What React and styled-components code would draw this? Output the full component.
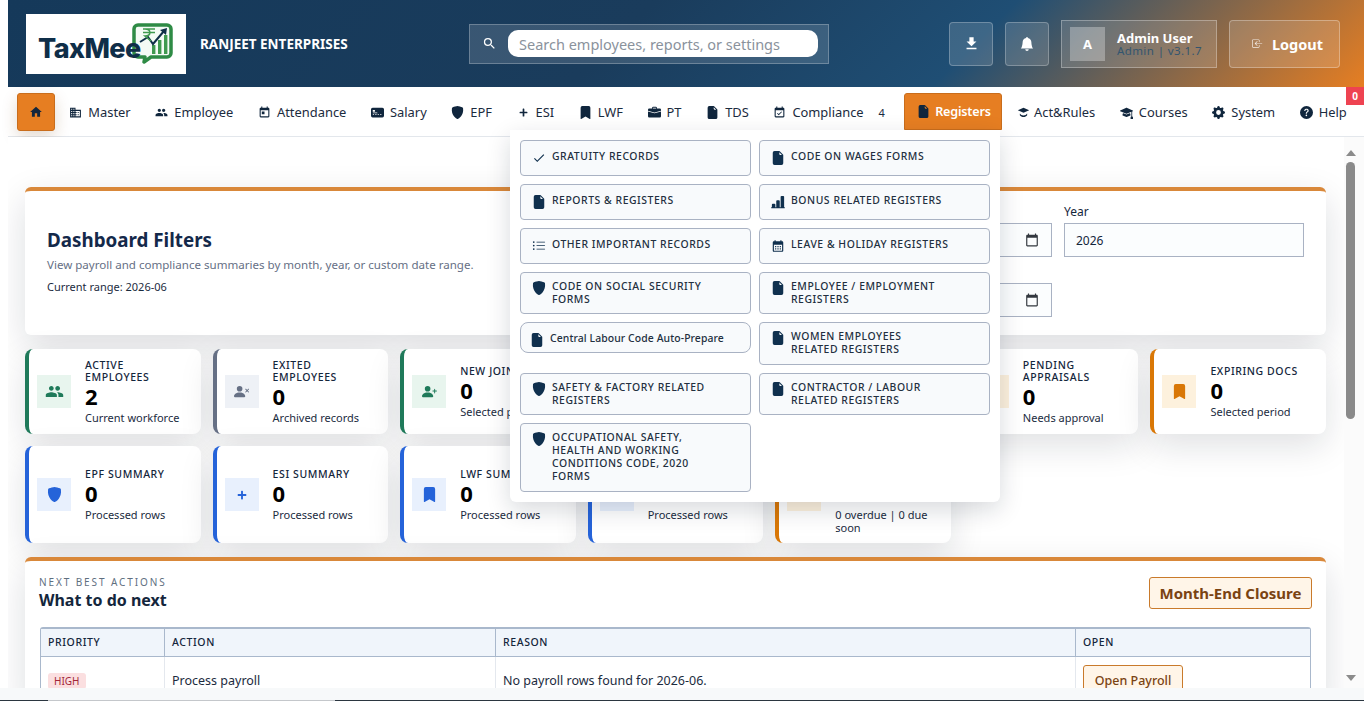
import React from 'react';
import styled, { createGlobalStyle } from 'styled-components';
import { MdHome, MdBusiness, MdPeople, MdToday, MdEventAvailable, MdCheck, MdFileDownload, MdSearch, MdCalendarToday, MdCalendarMonth } from 'react-icons/md';
import { FaPlus } from 'react-icons/fa';
import {
    BsCreditCard2FrontFill, BsShieldFill, BsBookmarkFill, BsBriefcaseFill, BsFileEarmarkFill,
    BsMortarboardFill, BsGearFill, BsQuestionCircleFill, BsBarChartLineFill, BsListUl,
    BsBellFill, BsBoxArrowInLeft, BsPersonXFill, BsPersonPlusFill,
} from 'react-icons/bs';

const FONT = '"Noto Sans", "Liberation Sans", sans-serif';

const GlobalStyle = createGlobalStyle`
    html, body {
        margin: 0;
        padding: 0;
        height: 100%;
        overflow: hidden;
        background: #fff;
    }
    * {
        box-sizing: border-box;
    }
    body {
        font-family: ${FONT};
        color: #14263c;
    }
`;

const Page = styled.div`
    position: relative;
    width: 1364px;
    height: 701px;
    padding-left: 8px;
    display: flex;
    flex-direction: column;
    overflow: hidden;
    background: #fff;
`;

const Header = styled.header`
    flex: 0 0 87px;
    display: flex;
    align-items: center;
    padding: 0 24px 0 18px;
    background: linear-gradient(135deg, #15395a 0%, #1a3c5c 45%, #1f4e74 70%, #e67e22 100%);
`;

const LogoBox = styled.div`
    width: 160px;
    height: 60px;
    flex: none;
    background: #fff;
    display: flex;
    align-items: flex-start;
    padding: 9px 0 0 12px;
`;

const LogoText = styled.span`
    position: relative;
    z-index: 1;
    margin-top: 9px;
    font-family: Inter, sans-serif;
    font-size: 27px;
    line-height: 33px;
    font-weight: 800;
    letter-spacing: -0.6px;
    color: #0f2e48;
`;

const LogoMark = styled.svg`
    width: 41px;
    height: 42px;
    margin-left: -9px;
    flex: none;
`;

const Company = styled.div`
    margin-left: 14px;
    width: 269px;
    flex: none;
    color: #fff;
    font-size: 13.5px;
    font-weight: 700;
`;

const SearchBar = styled.div`
    width: 360px;
    height: 40px;
    flex: none;
    display: flex;
    align-items: center;
    padding: 0 10px 0 12px;
    gap: 11px;
    background: rgba(255, 255, 255, 0.14);
    border: 1px solid rgba(255, 255, 255, 0.25);
    color: #fff;
    font-size: 15px;
`;

const SearchInput = styled.div`
    flex: 1;
    height: 27px;
    padding-left: 11px;
    display: flex;
    align-items: center;
    background: #fff;
    border-radius: 10px;
    color: #8a929c;
    font-size: 14.5px;
`;

const HeaderActions = styled.div`
    margin-left: auto;
    display: flex;
    align-items: center;
    gap: 12px;
`;

const IconButton = styled.button`
    width: 44px;
    height: 44px;
    padding: 0;
    display: flex;
    align-items: center;
    justify-content: center;
    color: #fff;
    font-size: ${(p) => p.$size}px;
    background: rgba(255, 255, 255, 0.14);
    border: 1px solid rgba(255, 255, 255, 0.25);
    border-radius: 4px;
`;

const UserBox = styled.div`
    width: 156px;
    height: 48px;
    display: flex;
    align-items: center;
    gap: 12px;
    padding-left: 8px;
    background: rgba(255, 255, 255, 0.14);
    border: 1px solid rgba(255, 255, 255, 0.3);
`;

const Avatar = styled.div`
    width: 35px;
    height: 34px;
    display: flex;
    align-items: center;
    justify-content: center;
    background: rgba(255, 255, 255, 0.3);
    color: #fff;
    font-size: 13px;
    font-weight: 700;
`;

const UserName = styled.div`
    color: #fff;
    font-size: 13px;
    font-weight: 700;
    line-height: 14px;
`;

const UserRole = styled.div`
    color: #33556f;
    font-size: 11.5px;
    line-height: 12px;
    letter-spacing: 0.4px;
`;

const LogoutButton = styled.button`
    width: 111px;
    height: 48px;
    padding: 0 0 0 6px;
    display: flex;
    align-items: center;
    justify-content: center;
    gap: 9px;
    color: #fff;
    font-family: ${FONT};
    font-size: 14.5px;
    font-weight: 700;
    background: rgba(255, 255, 255, 0.15);
    border: 1px solid rgba(255, 255, 255, 0.3);
    border-radius: 4px;

    svg {
        font-size: 11px;
        opacity: 0.85;
    }
`;

const Nav = styled.nav`
    flex: 0 0 50px;
    display: flex;
    align-items: flex-start;
    padding: 6px 0 0 9px;
    background: #fff;
    border-bottom: 1px solid #e3e7ec;
`;

const HomeButton = styled.div`
    width: 38px;
    height: 38px;
    flex: none;
    margin-right: 2px;
    display: flex;
    align-items: center;
    justify-content: center;
    background: #e67e22;
    border: 1px solid #c96d1c;
    border-radius: 3px;
    box-shadow: 0 6px 16px rgba(120, 70, 20, 0.2);
    color: #14263c;
    font-size: 14px;
`;

const NavItem = styled.div`
    flex: none;
    height: 38px;
    display: flex;
    align-items: center;
    gap: 6px;
    padding: 0 12.3px;
    font-size: 12.9px;
    white-space: nowrap;
    color: #1b2b3e;

    svg {
        color: #10263d;
        font-size: 13px;
        flex: none;
    }
`;

const ActiveNavItem = styled(NavItem)`
    height: 37px;
    gap: 5px;
    margin: 0 3px 0 7px;
    padding: 0 10px 0 12px;
    color: #fff;
    font-weight: 600;
    font-size: 12.6px;
    letter-spacing: -0.2px;
    background: #e67e22;
    border: 1px solid #c96d1c;
    border-radius: 3px 3px 0 0;
`;

const NavCount = styled.span`
    margin-left: 9px;
    font-size: 11px;
`;

const PlusIcon = styled(FaPlus)`
    margin: 0 2px;
`;

const RedBadge = styled.div`
    position: absolute;
    top: 87px;
    right: 0;
    width: 18px;
    height: 18px;
    display: flex;
    align-items: center;
    justify-content: center;
    background: #ee4351;
    color: #fff;
    font-size: 10px;
    font-weight: 700;
`;

const Dropdown = styled.div`
    position: absolute;
    top: 130px;
    left: 510px;
    width: 490px;
    height: 372px;
    padding: 10px;
    display: grid;
    grid-template-columns: 231px 231px;
    grid-auto-rows: min-content;
    column-gap: 8px;
    row-gap: 8px;
    align-items: start;
    background: #fff;
    border-radius: 0 0 6px 6px;
    box-shadow: 0 8px 24px rgba(15, 23, 42, 0.16);
`;

const DropItem = styled.div`
    display: flex;
    align-items: flex-start;
    gap: 6px;
    min-height: ${(p) => p.$height}px;
    padding: ${(p) => (p.$multi ? 7 : 9)}px 8px 0 ${(p) => (p.$plain ? 9 : 11)}px;
    font-size: 10.4px;
    line-height: 13px;
    font-weight: 500;
    letter-spacing: ${(p) => (p.$plain ? '0.1px' : '0.55px')};
    text-transform: ${(p) => (p.$plain ? 'none' : 'uppercase')};
    color: #222f40;
    background: #f8fafc;
    border: 1px solid #a9b2c3;
    border-radius: ${(p) => (p.$plain ? '8px' : '4px')};

    svg {
        flex: 0 0 14px;
        font-size: 14px;
        color: #10304e;
        margin-top: 1px;
    }
`;

const Body = styled.div`
    flex: 1;
    min-height: 0;
    display: flex;
    overflow: hidden;
`;

const Main = styled.main`
    flex: 1;
    min-width: 0;
    padding: 50px 18px 0 17px;
    overflow: hidden;
    display: flex;
    flex-direction: column;
    background: #fff;
`;

const ScrollTrack = styled.div`
    flex: 0 0 20px;
    background: #fbfbfb;
    display: flex;
    flex-direction: column;
    align-items: flex-start;
    padding: 13px 0 0 2px;
`;

const ArrowUp = styled.div`
    width: 0;
    height: 0;
    border-left: 5px solid transparent;
    border-right: 5px solid transparent;
    border-bottom: 6px solid #8b8b8b;
`;

const ArrowDown = styled(ArrowUp)`
    margin-top: 256px;
    border-bottom: none;
    border-top: 6px solid #8b8b8b;
`;

const Thumb = styled.div`
    width: 9px;
    height: 257px;
    margin-top: 6px;
    background: #8a8a8a;
    border-radius: 5px;
`;

const Panel = styled.section`
    background: #fff;
    border-top: 4px solid #d9883a;
    border-radius: 6px;
    box-shadow: 0 12px 36px rgba(15, 23, 42, 0.14);
`;

const FilterPanel = styled(Panel)`
    flex: 0 0 148px;
    display: flex;
    padding: 0 22px;
    justify-content: space-between;
`;

const FilterIntro = styled.div`
    padding-top: 37px;
`;

const FilterTitle = styled.h2`
    margin: 0;
    font-size: 18.8px;
    line-height: 24px;
    font-weight: 700;
    color: #14294a;
`;

const FilterDesc = styled.p`
    margin: 5px 0 0;
    font-size: 11.55px;
    line-height: 16px;
    color: #667085;
`;

const FilterRange = styled.p`
    margin: 6px 0 0;
    font-size: 11px;
    line-height: 16px;
    color: #1b2b3e;
`;

const FilterFields = styled.div`
    display: grid;
    grid-template-columns: 240px 240px;
    gap: 7px 12px;
    padding-top: 13px;
    grid-auto-rows: min-content;
`;

const Field = styled.div`
    display: flex;
    flex-direction: column;
`;

const FieldLabel = styled.label`
    font-size: 12px;
    line-height: 16px;
    height: 19px;
    color: #14263c;
`;

const FieldBox = styled.div`
    height: 34px;
    padding: 0 12px 0 11px;
    display: flex;
    align-items: center;
    justify-content: space-between;
    font-size: 12px;
    background: #fbfdfe;
    border: 1px solid #a9b2c3;
    color: #14263c;

    svg {
        font-size: 14px;
        color: #33383f;
    }
`;

const CardGrid = styled.div`
    margin-top: 14px;
    display: grid;
    grid-template-columns: repeat(7, 1fr);
    gap: 12px;
`;

const Card = styled.div`
    height: ${(p) => p.$height}px;
    display: flex;
    align-items: center;
    gap: 14px;
    padding: 0 14px 0 8px;
    background: #fff;
    border-left: 4px solid ${(p) => p.$color};
    border-radius: 8px;
    box-shadow: 0 12px 34px rgba(15, 23, 42, 0.13);
`;

const CardIcon = styled.div`
    flex: none;
    width: 34px;
    height: 33px;
    display: flex;
    align-items: center;
    justify-content: center;
    background: ${(p) => p.$tint};
    color: ${(p) => p.$color};
    font-size: 15px;
`;

const CardLabel = styled.div`
    font-size: 10.5px;
    line-height: 12px;
    font-weight: 500;
    letter-spacing: 0.6px;
    text-transform: uppercase;
    color: #14263c;
`;

const CardValue = styled.div`
    font-size: 22px;
    line-height: 26px;
    font-weight: 700;
    color: #000;
`;

const CardSub = styled.div`
    font-size: 11px;
    line-height: 13px;
    margin-top: 2px;
    color: #1b2b3e;
`;

const ActionsPanel = styled(Panel)`
    margin-top: 14px;
    flex: none;
    padding: 15px 15px 0;
`;

const ActionsHead = styled.div`
    height: 35px;
    margin: 0 -1px;
    display: flex;
    align-items: flex-start;
    justify-content: space-between;
`;

const Eyebrow = styled.div`
    font-size: 10px;
    line-height: 12px;
    letter-spacing: 1.9px;
    color: #5f6f7f;
`;

const ActionsTitle = styled.h3`
    margin: 1px 0 0;
    font-size: 16px;
    line-height: 22px;
    font-weight: 700;
    color: #14263c;
`;

const ClosureButton = styled.button`
    width: 163px;
    height: 32px;
    margin-top: 1px;
    padding: 0;
    font-family: ${FONT};
    font-size: 15px;
    font-weight: 700;
    color: #7a4312;
    background: #fff5e8;
    border: 1px solid #c97a2b;
    border-radius: 3px;
`;

const Table = styled.table`
    width: 1271px;
    margin-top: 16px;
    border-collapse: separate;
    border-spacing: 0;
    table-layout: fixed;
    border: 1px solid #a9b8cc;
    border-top-width: 2px;
    border-radius: 3px;
    font-size: 12.5px;
`;

const Th = styled.th`
    width: ${(p) => p.$width}px;
    height: 28px;
    padding: 0 7px 2px;
    text-align: left;
    font-size: 10.5px;
    font-weight: 500;
    letter-spacing: 0.6px;
    background: #f0f5fb;
    border-bottom: 1px solid #a9b8cc;
    border-left: ${(p) => (p.$first ? 'none' : '1px solid #a9b8cc')};
    color: #14263c;
`;

const Td = styled.td`
    height: 46px;
    padding: 0 7px;
    border-left: ${(p) => (p.$first ? 'none' : '1px solid #e4e8ee')};
    color: #1b2b3e;
`;

const Priority = styled.span`
    display: inline-block;
    padding: 0 6px;
    height: 16px;
    line-height: 16px;
    font-size: 10px;
    color: #a3263a;
    background: #fbdfe0;
    border-radius: 3px;
`;

const OpenButton = styled.button`
    width: 100px;
    height: 30px;
    padding: 0;
    font-family: ${FONT};
    font-size: 12.5px;
    font-weight: 500;
    color: #7a4312;
    background: #fff5e8;
    border: 1px solid #c97a2b;
    border-radius: 3px;
`;

const BottomBar = styled.div`
    flex: 0 0 13px;
    margin-left: -8px;
    background: #f7f9fa;
    display: flex;
    align-items: flex-end;
`;

const BottomEdge = styled.div`
    height: 1px;
    width: ${(p) => p.$width}px;
    background: ${(p) => p.$color};
`;

const ActRulesSvg = styled.svg`
    margin-right: -2px;
`;

const ActRulesIcon = () => (
    <ActRulesSvg width="1em" height="1em" viewBox="0 0 16 16" fill="currentColor">
        <path d="M8 2l7 3.2L8 8.4 1 5.2z" />
        <path d="M3.5 9.2c1 1.6 2.6 2.4 4.5 2.4s3.5-.8 4.5-2.4v2.2c-1 1.4-2.6 2.2-4.5 2.2s-3.5-.8-4.5-2.2z" />
    </ActRulesSvg>
);

const navItems = [
    { icon: <MdBusiness />, label: 'Master' },
    { icon: <MdPeople />, label: 'Employee' },
    { icon: <MdToday />, label: 'Attendance' },
    { icon: <BsCreditCard2FrontFill />, label: 'Salary' },
    { icon: <BsShieldFill />, label: 'EPF' },
    { icon: <PlusIcon size={9} />, label: 'ESI' },
    { icon: <BsBookmarkFill />, label: 'LWF' },
    { icon: <BsBriefcaseFill />, label: 'PT' },
    { icon: <BsFileEarmarkFill />, label: 'TDS' },
    { icon: <MdEventAvailable />, label: 'Compliance', count: 4 },
    { icon: <BsFileEarmarkFill />, label: 'Registers', active: true },
    { icon: <ActRulesIcon />, label: 'Act&Rules' },
    { icon: <BsMortarboardFill />, label: 'Courses' },
    { icon: <BsGearFill />, label: 'System' },
    { icon: <BsQuestionCircleFill />, label: 'Help' },
];

const dropItems = [
    { icon: <MdCheck />, lines: ['Gratuity Records'], height: 36 },
    { icon: <BsFileEarmarkFill />, lines: ['Code on Wages Forms'], height: 36 },
    { icon: <BsFileEarmarkFill />, lines: ['Reports & Registers'], height: 36 },
    { icon: <BsBarChartLineFill />, lines: ['Bonus Related Registers'], height: 36 },
    { icon: <BsListUl />, lines: ['Other Important Records'], height: 36 },
    { icon: <MdCalendarMonth />, lines: ['Leave & Holiday Registers'], height: 36 },
    { icon: <BsShieldFill />, lines: ['Code on Social Security', 'Forms'], height: 42 },
    { icon: <BsFileEarmarkFill />, lines: ['Employee / Employment', 'Registers'], height: 42 },
    { icon: <BsFileEarmarkFill />, lines: ['Central Labour Code Auto-Prepare'], height: 31, plain: true },
    { icon: <BsFileEarmarkFill />, lines: ['Women Employees', 'Related Registers'], height: 43 },
    { icon: <BsShieldFill />, lines: ['Safety & Factory Related', 'Registers'], height: 42 },
    { icon: <BsFileEarmarkFill />, lines: ['Contractor / Labour', 'Related Registers'], height: 42 },
    { icon: <BsShieldFill />, lines: ['Occupational Safety,', 'Health and Working', 'Conditions Code, 2020', 'Forms'], height: 69 },
];

const GREEN = { $color: '#1f7a5a', $tint: '#e8f5ee' };
const GREY = { $color: '#667085', $tint: '#eef1f6' };
const BLUE = { $color: '#2563d9', $tint: '#e8f0fd' };
const ORANGE = { $color: '#d97706', $tint: '#fdf1dd' };

const topCards = [
    { ...GREEN, icon: <MdPeople size={19} />, label: 'Active Employees', value: 2, sub: 'Current workforce' },
    { ...GREY, icon: <BsPersonXFill />, label: 'Exited Employees', value: 0, sub: 'Archived records' },
    { ...GREEN, icon: <BsPersonPlusFill />, label: 'New Joiners', value: 0, sub: 'Selected period' },
    { ...ORANGE, icon: <BsCreditCard2FrontFill />, label: 'Payroll Rows', value: 0, sub: 'Selected period' },
    { ...ORANGE, icon: <MdToday />, label: 'Leave Requests', value: 0, sub: 'Selected period' },
    { ...ORANGE, icon: <BsBookmarkFill />, label: 'Pending Appraisals', value: 0, sub: 'Needs approval' },
    { ...ORANGE, icon: <BsBookmarkFill />, label: 'Expiring Docs', value: 0, sub: 'Selected period' },
];

const bottomCards = [
    { ...BLUE, icon: <BsShieldFill />, label: 'EPF Summary', value: 0, sub: 'Processed rows' },
    { ...BLUE, icon: <FaPlus size={10} />, label: 'ESI Summary', value: 0, sub: 'Processed rows' },
    { ...BLUE, icon: <BsBookmarkFill />, label: 'LWF Summary', value: 0, sub: 'Processed rows' },
    { ...BLUE, icon: <BsBriefcaseFill />, label: 'PT Summary', value: 0, sub: 'Processed rows' },
    { ...ORANGE, icon: <MdEventAvailable />, label: 'Compliance Due Items', value: 0, sub: '0 overdue | 0 due soon' },
];

const StatCard = ({ $color, $tint, icon, label, value, sub, height }) => (
    <Card $color={$color} $height={height}>
        <CardIcon $color={$color} $tint={$tint}>
            {icon}
        </CardIcon>
        <div>
            <CardLabel>{label}</CardLabel>
            <CardValue>{value}</CardValue>
            <CardSub>{sub}</CardSub>
        </div>
    </Card>
);

const Logo = () => (
    <LogoBox>
        <LogoText>TaxMee</LogoText>
        <LogoMark viewBox="0 0 41 42">
            <path
                d="M6 2h29a4 4 0 0 1 4 4v24a4 4 0 0 1-4 4H19l-7 5 1-5H6a4 4 0 0 1-4-4V6a4 4 0 0 1 4-4z"
                fill="#f4fbf5"
                stroke="#2e8b45"
                strokeWidth="3.5"
                strokeLinejoin="round"
            />
            <rect x="20" y="22" width="3.4" height="9" fill="#3f9a4f" />
            <rect x="26" y="17" width="3.4" height="14" fill="#3f9a4f" />
            <rect x="32" y="12" width="3.4" height="19" fill="#3f9a4f" />
            <path d="M8 19l8-5 5 7L32 8" fill="none" stroke="#0f2e48" strokeWidth="2" />
            <path d="M28 7l7-2-1 7z" fill="#0f2e48" />
            <path d="M11 6h12M11 9.5h12M13 6c6.5 0 6.5 7 0 7l6 5" fill="none" stroke="#3f9a4f" strokeWidth="1.6" />
        </LogoMark>
    </LogoBox>
);

const App = () => {
    return (
        <Page>
            <GlobalStyle />
            <Header>
                <Logo />
                <Company>RANJEET ENTERPRISES</Company>
                <SearchBar>
                    <MdSearch />
                    <SearchInput>Search employees, reports, or settings</SearchInput>
                </SearchBar>
                <HeaderActions>
                    <IconButton $size={17}>
                        <MdFileDownload />
                    </IconButton>
                    <IconButton $size={14}>
                        <BsBellFill />
                    </IconButton>
                    <UserBox>
                        <Avatar>A</Avatar>
                        <div>
                            <UserName>Admin User</UserName>
                            <UserRole>Admin | v3.1.7</UserRole>
                        </div>
                    </UserBox>
                    <LogoutButton>
                        <BsBoxArrowInLeft />
                        Logout
                    </LogoutButton>
                </HeaderActions>
            </Header>
            <Nav>
                <HomeButton>
                    <MdHome />
                </HomeButton>
                {navItems.map((item) => {
                    const Item = item.active ? ActiveNavItem : NavItem;
                    return (
                        <Item key={item.label}>
                            {item.icon}
                            <span>{item.label}</span>
                            {item.count && <NavCount>{item.count}</NavCount>}
                        </Item>
                    );
                })}
            </Nav>
            <RedBadge>0</RedBadge>
            <Body>
                <Main>
                    <FilterPanel>
                        <FilterIntro>
                            <FilterTitle>Dashboard Filters</FilterTitle>
                            <FilterDesc>View payroll and compliance summaries by month, year, or custom date range.</FilterDesc>
                            <FilterRange>Current range: 2026-06</FilterRange>
                        </FilterIntro>
                        <FilterFields>
                            <Field>
                                <FieldLabel>Month</FieldLabel>
                                <FieldBox>
                                    <span />
                                    <MdCalendarToday />
                                </FieldBox>
                            </Field>
                            <Field>
                                <FieldLabel>Year</FieldLabel>
                                <FieldBox>2026</FieldBox>
                            </Field>
                            <Field>
                                <FieldLabel>To</FieldLabel>
                                <FieldBox>
                                    <span />
                                    <MdCalendarToday />
                                </FieldBox>
                            </Field>
                        </FilterFields>
                    </FilterPanel>
                    <CardGrid>
                        {topCards.map((card) => (
                            <StatCard key={card.label} {...card} height={85} />
                        ))}
                        {bottomCards.map((card) => (
                            <StatCard key={card.label} {...card} height={97} />
                        ))}
                    </CardGrid>
                    <ActionsPanel>
                        <ActionsHead>
                            <div>
                                <Eyebrow>NEXT BEST ACTIONS</Eyebrow>
                                <ActionsTitle>What to do next</ActionsTitle>
                            </div>
                            <ClosureButton>Month-End Closure</ClosureButton>
                        </ActionsHead>
                        <Table>
                            <thead>
                                <tr>
                                    <Th $first $width={123}>PRIORITY</Th>
                                    <Th $width={331}>ACTION</Th>
                                    <Th $width={580}>REASON</Th>
                                    <Th $width={235}>OPEN</Th>
                                </tr>
                            </thead>
                            <tbody>
                                <tr>
                                    <Td $first><Priority>HIGH</Priority></Td>
                                    <Td>Process payroll</Td>
                                    <Td>No payroll rows found for 2026-06.</Td>
                                    <Td><OpenButton>Open Payroll</OpenButton></Td>
                                </tr>
                            </tbody>
                        </Table>
                    </ActionsPanel>
                </Main>
                <ScrollTrack>
                    <ArrowUp />
                    <Thumb />
                    <ArrowDown />
                </ScrollTrack>
            </Body>
            <BottomBar>
                <BottomEdge $width={48} $color="#2b3640" />
                <BottomEdge $width={287} $color="#c4c7cb" />
                <BottomEdge $width={1029} $color="#2b3640" />
            </BottomBar>
            <Dropdown>
                {dropItems.map((item) => (
                    <DropItem key={item.lines[0]} $height={item.height} $plain={item.plain} $multi={item.lines.length > 1}>
                        {item.icon}
                        <span>
                            {item.lines.map((line) => (
                                <div key={line}>{line}</div>
                            ))}
                        </span>
                    </DropItem>
                ))}
            </Dropdown>
        </Page>
    );
};

export default App;
